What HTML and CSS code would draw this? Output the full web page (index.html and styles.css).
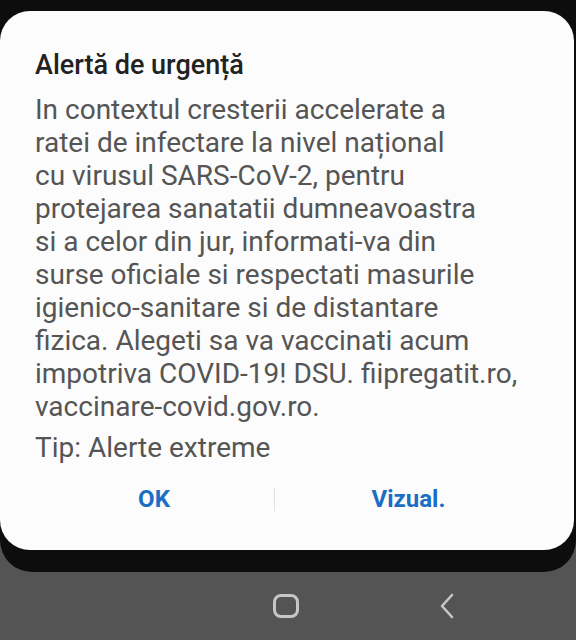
FILE: index.html
```html
<html>
<head>
<meta charset="UTF-8">
<meta name="viewport" content="width=device-width, initial-scale=1.0">
<title>Alertă de urgență</title>
<link rel="stylesheet" href="styles.css">
</head>
<body>
    <div class="frame">
        <div class="dialog">
            <h1 class="title">Alertă de urgență</h1>
            <p class="message">
                In contextul cresterii accelerate a<br>
                ratei de infectare la nivel național<br>
                cu virusul SARS-CoV-2, pentru<br>
                protejarea sanatatii dumneavoastra<br>
                si a celor din jur, informati-va din<br>
                surse oficiale si respectati masurile<br>
                igienico-sanitare si de distantare<br>
                fizica. Alegeti sa va vaccinati acum<br>
                impotriva COVID-19! DSU. fiipregatit.ro,<br>
                vaccinare-covid.gov.ro.
            </p>
            <p class="type">Tip: Alerte extreme</p>
            <div class="actions">
                <span class="btn btn-ok">OK</span>
                <span class="divider"></span>
                <span class="btn">Vizual.</span>
            </div>
        </div>
    </div>

    <!-- bara de navigare -->
    <div class="navbar">
        <span class="nav-home"></span>
        <svg class="nav-back" width="16" height="26" viewBox="0 0 16 26">
            <path d="M13 2 L3 13 L13 24" fill="none" stroke="#c6c6c6" stroke-width="2.6" stroke-linecap="round" stroke-linejoin="round"/>
        </svg>
    </div>
</body>
</html>
```

FILE: styles.css
```css
html, body {
    margin: 0;
    padding: 0;
}
body {
    width: 576px;
    height: 640px;
    overflow: hidden;
    background-color: #545454;
    font-family: Roboto, "Noto Sans", sans-serif;
}
.frame {
    box-sizing: border-box;
    height: 572px;
    padding: 11px 2px 22px 0;
    background-color: #0d0d0d;
    border-radius: 0 0 32px 32px;
}
.dialog {
    box-sizing: border-box;
    height: 539px;
    padding: 39px 0 0 35px;
    background-color: #fcfcfc;
    border-radius: 30px;
}
.title {
    margin: 0;
    font-size: 27px;
    font-weight: 500;
    line-height: 31px;
    color: #222;
}
.message {
    margin: 12px 0 0;
    font-size: 28px;
    line-height: 33px;
    color: #555;
}
.type {
    margin: 8px 0 0;
    font-size: 28px;
    line-height: 33px;
    color: #555;
}
.actions {
    display: flex;
    align-items: center;
    height: 50px;
    margin: 10px 0 0 -1px;
    padding-right: 32px;
}
.btn {
    flex: 1;
    text-align: center;
    font-size: 24px;
    font-weight: bold;
    color: #1b6ec4;
}
.btn-ok {
    flex: none;
    width: 240px;
}
.divider {
    width: 1px;
    height: 23px;
    background-color: #e2e2e2;
}
.navbar {
    display: flex;
    align-items: center;
    height: 68px;
}
.nav-home {
    box-sizing: border-box;
    width: 26px;
    height: 24px;
    margin-left: 273px;
    border: 3px solid #c6c6c6;
    border-radius: 8px;
}
.nav-back {
    margin-left: 140px;
}
```
